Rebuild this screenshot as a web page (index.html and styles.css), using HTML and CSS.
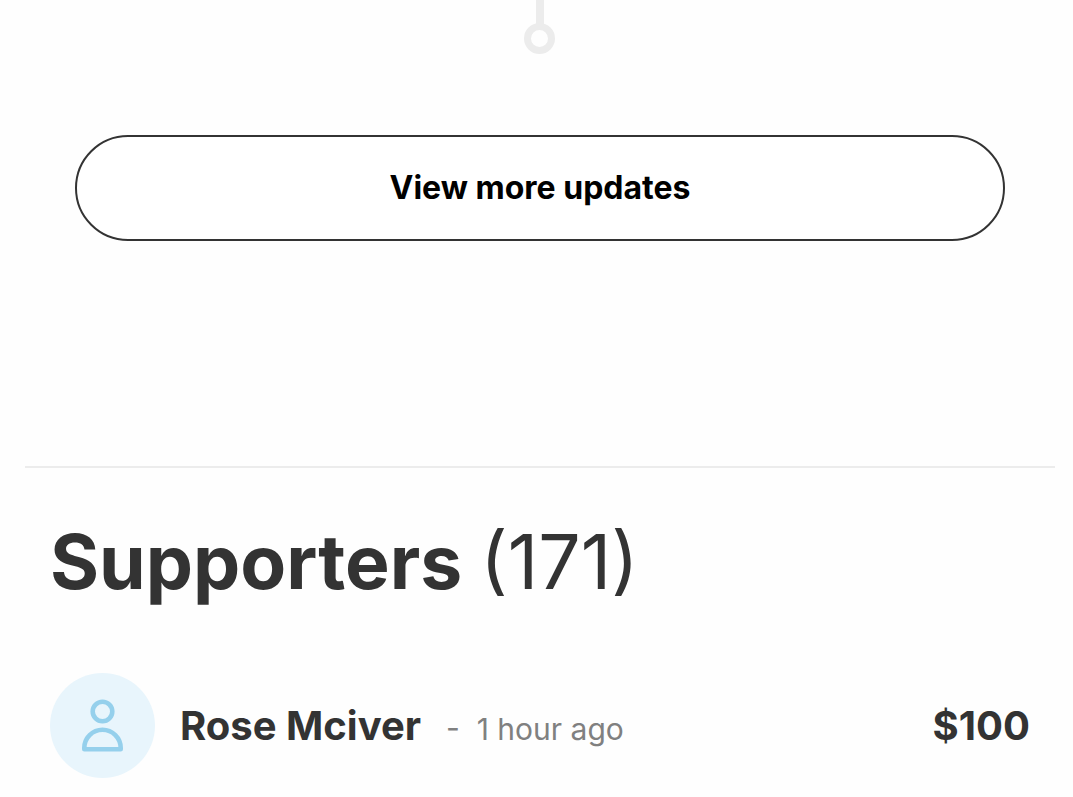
FILE: index.html
```
<!doctype html>
<html lang="en">
	<head>
		<meta charset="UTF-8">
		<meta name="viewport" content="width=device-width, initial-scale=1">
		<title>Supporters</title>

		<link rel="stylesheet" href="styles.css">
	</head>

	<body>
		<main class="container">
			<section class="updates">
				<svg class="timeline-end" viewBox="0 0 32 54" aria-hidden="true">
					<path d="M16 0v25" stroke-width="8"/>
					<circle cx="15.500" cy="38.500" r="12" stroke-width="7"/>
				</svg>

				<button class="more-button" type="button">View more updates</button>
			</section>

			<section class="supporters">
				<h2>Supporters <span class="count">(171)</span></h2>

				<ul class="supporter-list">
					<li class="supporter">
						<span class="avatar">
							<svg viewBox="0 0 105 105" aria-hidden="true">
								<circle cx="52.500" cy="38.500" r="9.800"/>
								<path d="M34.300 76.300v-1.300a18.200 18.200 0 0 1 36.400 0v1.300z"/>
							</svg>
						</span>
						<span class="name">Rose Mciver</span>
						<span class="time">-&nbsp; 1 hour ago</span>
						<span class="amount">$100</span>
					</li>
				</ul>
			</section>
		</main>
	</body>
</html>
```

FILE: styles.css
```
* {
	box-sizing: border-box;
	padding: 0;
	margin: 0;
}
body {
	background-color: #fefefe;
	color: #333;
	font-family: Inter, sans-serif;
}
.container {
	margin: 0 18px 0 25px;
}
.updates {
	display: flex;
	flex-direction: column;
	align-items: center;
	padding: 0 50px 225px;
	border-bottom: 2px solid #ececec;
}
.timeline-end {
	width: 32px;
	height: 54px;
	margin-bottom: 81px;
	fill: none;
	stroke: #ececec;
}
.more-button {
	width: 100%;
	padding: 32px 24px;
	background-color: #fff;
	border: 2px solid #333;
	border-radius: 53px;
	color: #000;
	font-family: inherit;
	font-size: 32px;
	font-weight: 700;
	line-height: 38px;
}
.supporters {
	padding: 48px 25px 0;
}
h2 {
	display: flex;
	gap: 18px;
	font-size: 75px;
	font-weight: 700;
	line-height: 92px;
}
.count {
	font-weight: 400;
}
.supporter-list {
	margin-top: 65px;
	list-style: none;
}
.supporter {
	display: flex;
	align-items: center;
}
.avatar {
	width: 105px;
	height: 105px;
	background-color: #e8f5fc;
	border-radius: 50%;
}
.avatar svg {
	display: block;
	fill: none;
	stroke: #95d0ec;
	stroke-width: 4.6;
	stroke-linejoin: round;
}
.name {
	margin-left: 25px;
	font-size: 40px;
	font-weight: 700;
}
.time {
	margin-left: 25px;
	padding-top: 6px;
	color: #808080;
	font-size: 30px;
}
.amount {
	margin-left: auto;
	font-size: 40px;
	font-weight: 700;
}
```
